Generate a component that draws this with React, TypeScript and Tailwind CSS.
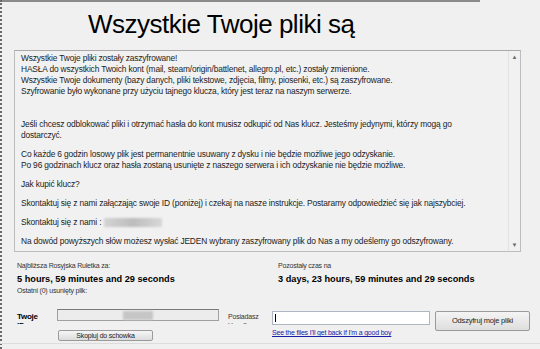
export default function App() {
  return (
    <div
      className="relative w-[540px] h-[349px] overflow-hidden bg-[#f0f0f0] text-[#111]"
      style={{ fontFamily: '"Liberation Sans", Arial, sans-serif' }}
    >
      {/* window edges */}
      <div className="absolute left-0 top-0 w-[480px] h-[2px] bg-[#8a8a8a]" />
      <div className="absolute left-0 top-0 w-[2px] h-full border-l-2 border-dotted border-[#6a6a6a]" />
      <div className="absolute left-0 bottom-[5px] w-full h-px bg-[#dcdcdc]" />

      <div className="flex flex-col">
        <h1 className="h-[50px] pl-[88px] pt-[9px] text-[26px] leading-[30px] tracking-[-0.5px] font-normal text-black">
          Wszystkie Twoje pliki są
        </h1>

        {/* message box */}
        <div className="ml-[14px] flex h-[202px] w-[507px] border border-[#bdbdbd] border-t-[#a9a9a9] bg-[#f1f1f1]">
          <div className="flex-1 pl-[6px] pt-[2px] text-[8.4px] leading-[11px] tracking-[-0.15px] text-[#1c1c1c]">
            <p>Wszystkie Twoje pliki zostały zaszyfrowane!</p>
            <p>HASŁA do wszystkich Twoich kont (mail, steam/origin/battlenet, allegro.pl, etc.) zostały zmienione.</p>
            <p>Wszystkie Twoje dokumenty (bazy danych, pliki tekstowe, zdjęcia, filmy, piosenki, etc.) są zaszyfrowane.</p>
            <p>Szyfrowanie było wykonane przy użyciu tajnego klucza, który jest teraz na naszym serwerze.</p>
            <p className="mt-[22px]">Jeśli chcesz odblokować pliki i otrzymać hasła do kont musisz odkupić od Nas klucz. Jesteśmy jedynymi, którzy mogą go</p>
            <p>dostarczyć.</p>
            <p className="mt-[8px]">Co każde 6 godzin losowy plik jest permanentnie usuwany z dysku i nie będzie możliwe jego odzyskanie.</p>
            <p>Po 96 godzinach klucz oraz hasła zostaną usunięte z naszego serwera i ich odzyskanie nie będzie możliwe.</p>
            <p className="mt-[8px]">Jak kupić klucz?</p>
            <p className="mt-[8px]">Skontaktuj się z nami załączając swoje ID (poniżej) i czekaj na nasze instrukcje. Postaramy odpowiedzieć się jak najszybciej.</p>
            <p className="mt-[8px] flex items-center gap-[3px]">
              Skontaktuj się z nami :
              <span className="inline-block h-[9px] w-[58px] bg-gradient-to-r from-[#d4d4d4] via-[#bdbdbd] to-[#d8d8d8] blur-[1px]" />
            </p>
            <p className="mt-[8px]">Na dowód powyższych słów możesz wysłać JEDEN wybrany zaszyfrowany plik do Nas a my odeślemy go odszyfrowany.</p>
          </div>
          <div className="flex w-[12px] flex-col items-center justify-between border-l border-[#e2e2e2] py-[3px] text-[6px] leading-none text-[#6b6b6b]">
            <span>▲</span>
            <span>▼</span>
          </div>
        </div>

        {/* timers */}
        <div className="mt-[9px] flex">
          <div className="w-[278px] pl-[17px]">
            <p className="text-[7px] leading-[10px] tracking-[-0.2px] text-[#333]">Najbliższa Rosyjska Ruletka za:</p>
            <p className="mt-[1px] text-[9.2px] leading-[14px] font-bold tracking-[0px] text-black">5 hours, 59 minutes and 29 seconds</p>
            <p className="text-[7px] leading-[10px] tracking-[-0.2px] text-[#333]">Ostatni (0) usunięty plik:</p>
          </div>
          <div>
            <p className="text-[7px] leading-[10px] tracking-[-0.2px] text-[#333]">Pozostały czas na</p>
            <p className="mt-[1px] text-[9.2px] leading-[14px] font-bold tracking-[0px] text-black">3 days, 23 hours, 59 minutes and 29 seconds</p>
          </div>
        </div>

        {/* id / key row */}
        <div className="mt-[13px] flex">
          <div className="h-[15px] w-[57px] overflow-hidden pl-[17px] pt-[3px] text-[8px] leading-[9px] font-bold tracking-[-0.3px] text-black">
            <p>Twoje</p>
            <p>ID:</p>
          </div>
          <div className="w-[171px]">
            <div className="flex h-[12px] w-[162px] items-center justify-center border border-[#a0a0a0] border-t-[#7a7a7a] bg-[#ececec]">
              <span className="h-[9px] w-[30px] bg-[#c6c6c6] blur-[1px]" />
            </div>
            <button className="mt-[4px] ml-px h-[11px] w-[95px] rounded-[2px] border border-[#9a9a9a] bg-gradient-to-b from-[#f6f6f6] to-[#dcdcdc] text-[7px] leading-[9px] tracking-[-0.2px] text-[#222]">
              Skopiuj do schowka
            </button>
          </div>
          <div className="h-[15px] w-[44px] overflow-hidden pt-[3px] text-[7px] leading-[9px] tracking-[-0.2px] text-[#333]">
            <p>Posiadasz</p>
            <p>klucz?</p>
          </div>
          <div className="w-[163px] pt-[2px]">
            <div className="flex h-[14px] w-[158px] items-center border border-[#aeb6c2] bg-white pl-[2px]">
              <span className="h-[8px] w-px bg-black" />
            </div>
            <a className="mt-[3px] block text-[7px] leading-[9px] tracking-[-0.2px] text-[#1a1aa6] underline">
              See the files I'll get back if I'm a good boy
            </a>
          </div>
          <button className="mt-[2px] h-[20px] w-[95px] rounded-[2px] border border-[#9a9a9a] bg-gradient-to-b from-[#f4f4f4] to-[#dedede] text-[7.5px] tracking-[-0.2px] text-[#222]">
            Odszyfruj moje pliki
          </button>
        </div>
      </div>
    </div>
  );
}
